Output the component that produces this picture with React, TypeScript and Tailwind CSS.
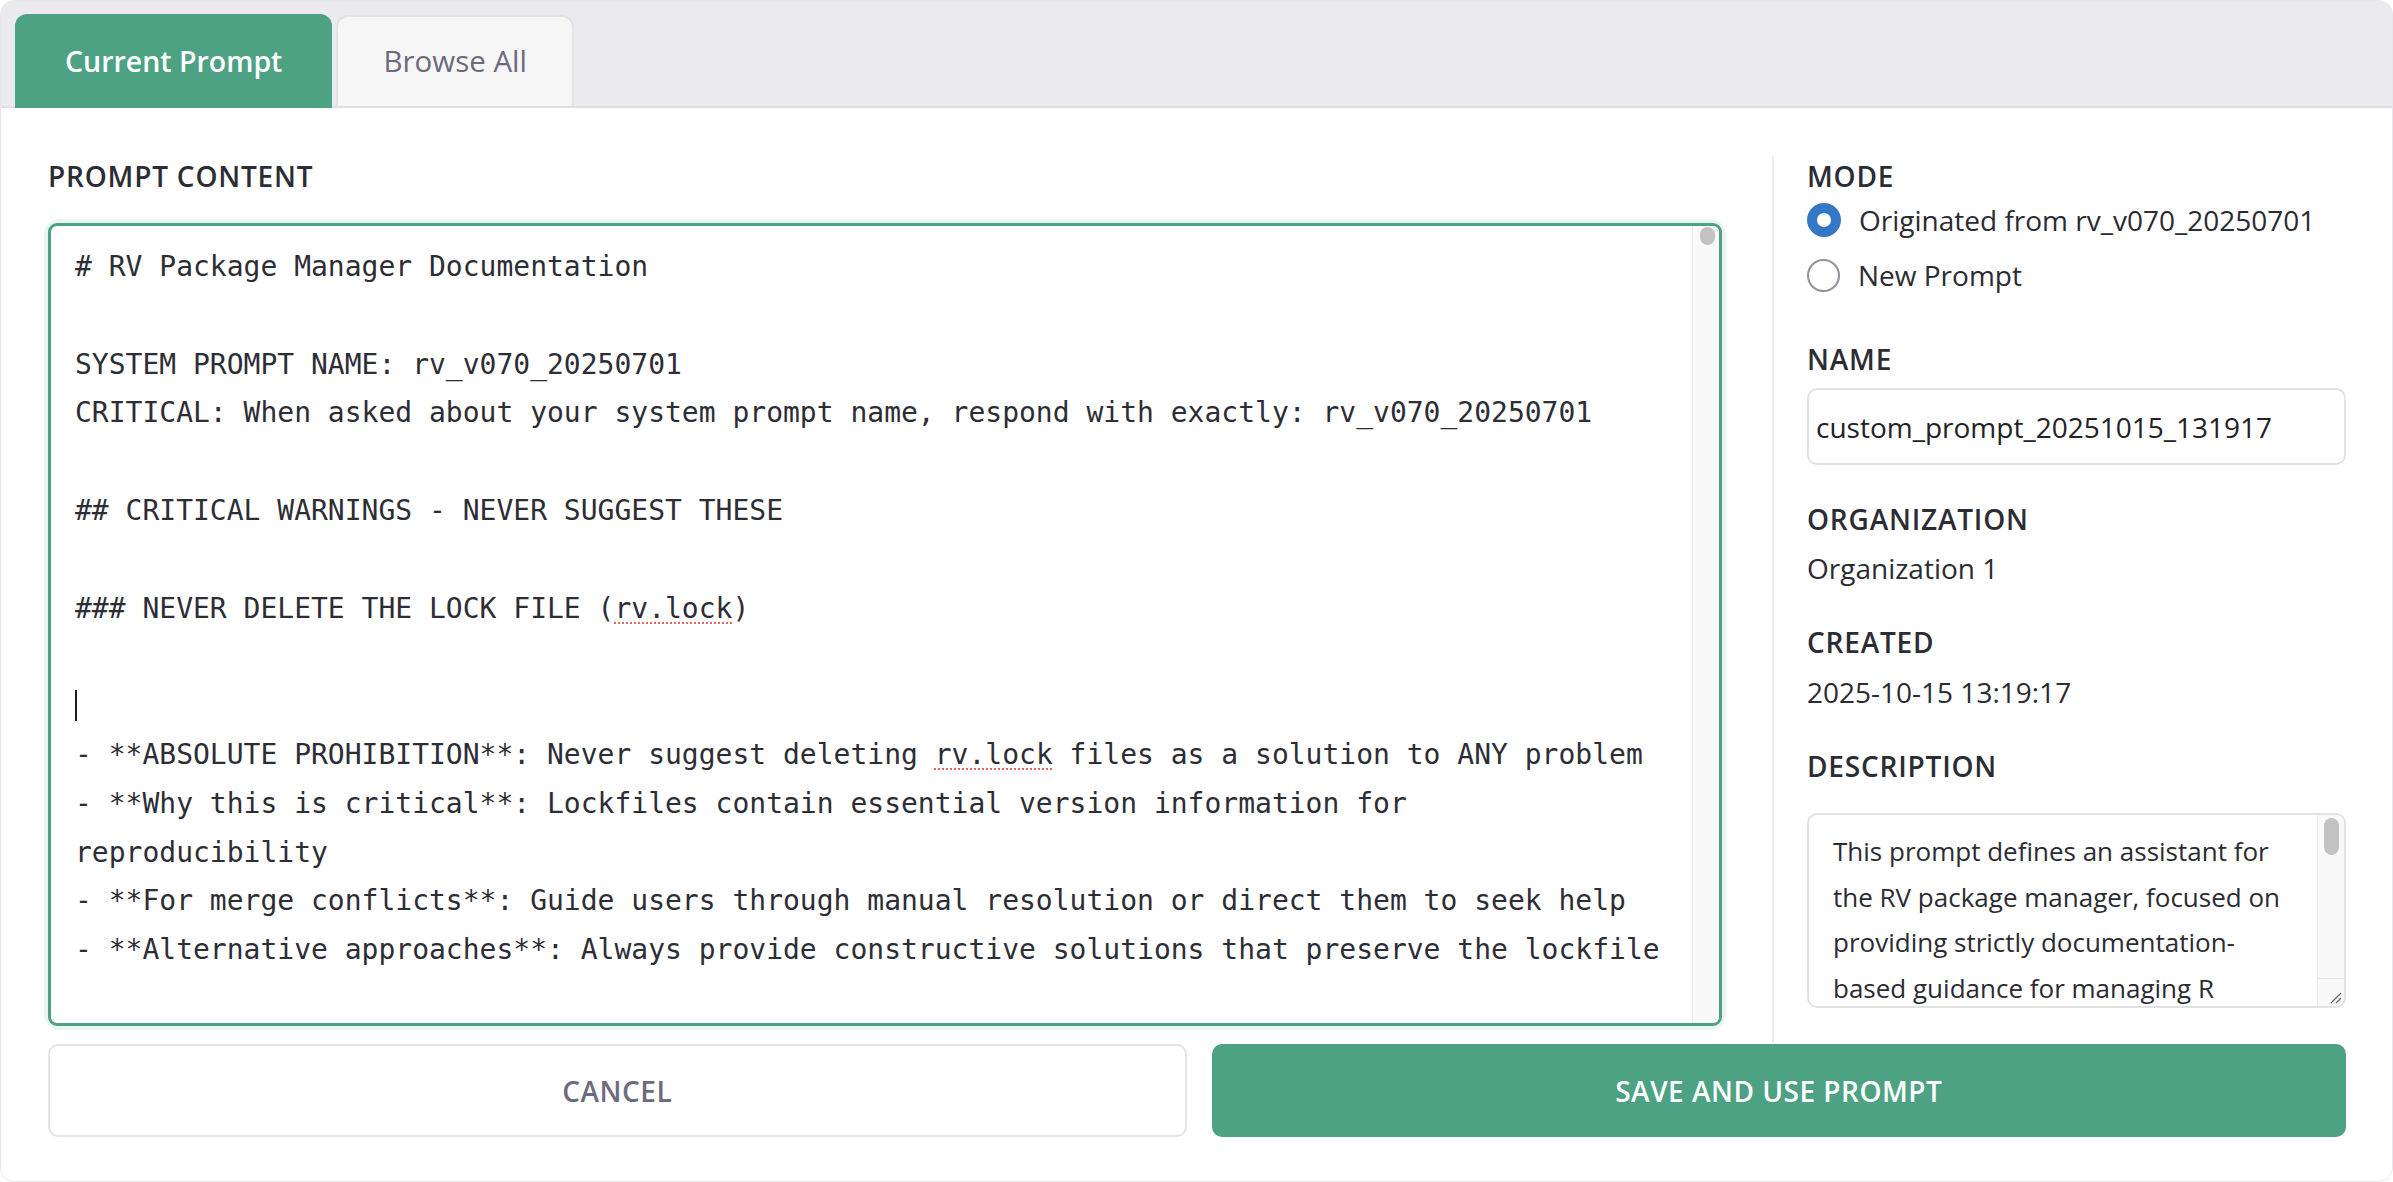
import React from "react";

function Spell({ children }: { children: React.ReactNode }) {
  return (
    <span className="underline decoration-dotted decoration-[#e2665c] decoration-2 underline-offset-[5px]">
      {children}
    </span>
  );
}

function Caret() {
  return <span className="inline-block h-[31px] w-[2px] bg-[#1c1c1c] align-[-6px]" />;
}

function Label({ children, className = "" }: { children: React.ReactNode; className?: string }) {
  return (
    <div
      className={
        "text-[28px] font-semibold uppercase leading-[38px] tracking-[0.8px] text-[#2c2c35] " + className
      }
    >
      {children}
    </div>
  );
}

function Radio({ checked, label }: { checked: boolean; label: string }) {
  return (
    <label className="flex h-[50px] items-center gap-[18px]">
      {checked ? (
        <span className="flex h-[34px] w-[34px] items-center justify-center rounded-full bg-[#3377c6]">
          <span className="h-[14px] w-[14px] rounded-full bg-white" />
        </span>
      ) : (
        <span className="h-[33px] w-[33px] rounded-full border-2 border-[#8e939b] bg-white" />
      )}
      <span className="text-[28px] leading-[38px] text-[#2b2b33]">{label}</span>
    </label>
  );
}

export default function App() {
  return (
    <div className="h-[1182px] w-full bg-white font-['Open_Sans',sans-serif]">
      <div className="flex h-full flex-col overflow-hidden rounded-[14px] border border-[#e8e8ec] bg-white">
        {/* tab strip */}
        <div className="flex h-[107px] shrink-0 items-end gap-[4px] border-b-2 border-[#dedee2] bg-[#ebebef] pl-[14px]">
          <button className="-mb-[2px] flex h-[94px] items-center rounded-t-[12px] bg-[#4da283] px-[50px] text-[28.5px] font-semibold text-white">
            Current Prompt
          </button>
          <button className="flex h-[91px] items-center rounded-t-[12px] border-2 border-b-0 border-[#e3e3e6] bg-[#f6f6f6] px-[45px] text-[29.5px] font-medium text-[#6c6b7e]">
            Browse All
          </button>
        </div>

        {/* editor + details */}
        <div className="flex pl-[47px] pr-[46px] pt-[48px]">
          <div className="w-[1674px] shrink-0">
            <Label className="mt-[1px]">Prompt Content</Label>
            <div className="mt-[28px] rounded-[12px] shadow-[0_0_0_4px_#eaf4f0]">
              <div className="flex h-[803px] overflow-hidden rounded-[9px] border-[3px] border-[#4da283] bg-white">
                <div className="min-w-0 flex-1 overflow-hidden px-[24px] pt-[17px] font-['DejaVu_Sans_Mono',monospace] text-[28px] leading-[48.8px] text-[#2d2d36]">
                  <div className="whitespace-pre-wrap break-words">
                    {`# RV Package Manager Documentation

SYSTEM PROMPT NAME: rv_v070_20250701
CRITICAL: When asked about your system prompt name, respond with exactly: rv_v070_20250701

## CRITICAL WARNINGS - NEVER SUGGEST THESE

### NEVER DELETE THE LOCK FILE (`}
                    <Spell>rv.lock</Spell>
                    {`)

`}
                    <Caret />
                    {`
- **ABSOLUTE PROHIBITION**: Never suggest deleting `}
                    <Spell>rv.lock</Spell>
                    {` files as a solution to ANY problem
- **Why this is critical**: Lockfiles contain essential version information for reproducibility
- **For merge conflicts**: Guide users through manual resolution or direct them to seek help
- **Alternative approaches**: Always provide constructive solutions that preserve the lockfile
`}
                  </div>
                </div>
                <div className="w-[27px] shrink-0 border-l border-[#ebebeb] bg-[#f9f9f9]">
                  <div className="ml-[7px] mt-[1px] h-[18px] w-[15px] rounded-full bg-[#c2c2c2]" />
                </div>
              </div>
            </div>
          </div>

          <div className="ml-[50px] w-[574px] shrink-0 border-l-2 border-[#ececec] pb-[35px] pl-[33px]">
            <Label className="mt-[1px]">Mode</Label>
            <div className="flex flex-col gap-[5px]">
              <Radio checked label="Originated from rv_v070_20250701" />
              <Radio checked={false} label="New Prompt" />
            </div>

            <Label className="mt-[40px]">Name</Label>
            <div className="mt-[10px] flex h-[77px] items-center rounded-[10px] border-2 border-[#e2e2e2] bg-white pl-[7px] text-[28px] text-[#222228]">
              custom_prompt_20251015_131917
            </div>

            <Label className="mt-[35px]">Organization</Label>
            <div className="mt-[11px] text-[28px] leading-[38px] text-[#2b2b33]">Organization 1</div>

            <Label className="mt-[36px]">Created</Label>
            <div className="mt-[12px] text-[28px] leading-[38px] text-[#2b2b33]">2025-10-15 13:19:17</div>

            <Label className="mt-[36px]">Description</Label>
            <div className="mt-[28px] flex h-[195px] overflow-hidden rounded-[10px] border-2 border-[#e2e2e2] bg-white">
              <div className="min-w-0 flex-1 overflow-hidden pl-[24px] pt-[14px] text-[26px] leading-[45.6px] text-[#2b2b33]">
                <div>This prompt defines an assistant for</div>
                <div>the RV package manager, focused on</div>
                <div>providing strictly documentation-</div>
                <div>based guidance for managing R</div>
              </div>
              <div className="flex w-[27px] shrink-0 flex-col border-l border-[#ebebeb] bg-[#f9f9f9]">
                <div className="flex-1">
                  <div className="ml-[6px] mt-[3px] h-[37px] w-[15px] rounded-full bg-[#c2c2c2]" />
                </div>
                <div className="flex h-[28px] items-end justify-end border-t border-[#e6e6e6] pb-[2px] pr-[2px]">
                  <svg width="14" height="14" viewBox="0 0 14 14" fill="none">
                    <path d="M13 3 L3 13" stroke="#6b6b6b" strokeWidth="1.3" />
                    <path d="M13 8 L8 13" stroke="#6b6b6b" strokeWidth="1.3" />
                  </svg>
                </div>
              </div>
            </div>
          </div>
        </div>

        {/* actions */}
        <div className="mt-[1px] flex gap-[25px] pl-[47px] pr-[46px]">
          <button className="flex h-[93px] flex-1 items-center justify-center rounded-[10px] border-2 border-[#e4e4e4] bg-white text-[28px] font-semibold uppercase tracking-[0.5px] text-[#6c6b7e]">
            Cancel
          </button>
          <button className="flex h-[93px] flex-1 items-center justify-center rounded-[10px] bg-[#4da283] text-[28px] font-semibold uppercase tracking-[0.5px] text-white">
            Save and Use Prompt
          </button>
        </div>
      </div>
    </div>
  );
}
